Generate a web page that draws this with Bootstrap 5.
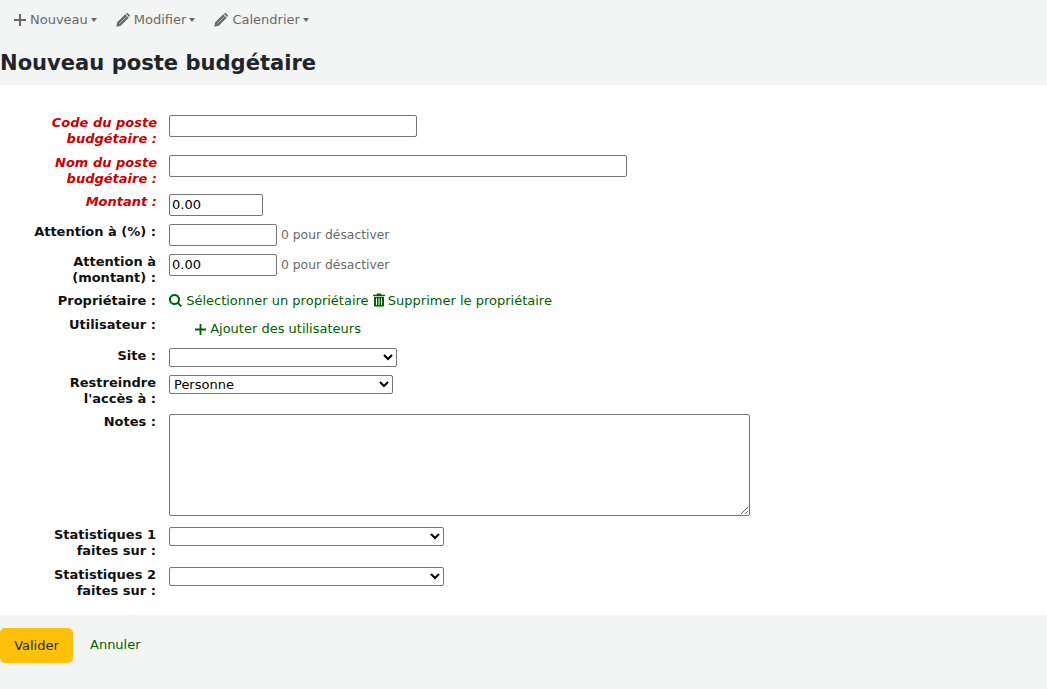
<!DOCTYPE html>
<html lang="fr">
<head>
<meta charset="utf-8">
<title>Nouveau poste budgétaire</title>
<link href="https://cdn.jsdelivr.net/npm/bootstrap@5.3.0/dist/css/bootstrap.min.css" rel="stylesheet">
<style>
html,body{height:100%}
body{font-family:"DejaVu Sans",sans-serif;font-size:13px;line-height:16px;background:#fff;color:#212529;display:flex;flex-direction:column;min-height:689px}
.kbar{background:#f3f4f4;height:85px}
.ktools{height:39px;padding-left:14px;gap:19px}
.ktool{color:#696969;font-size:13px;text-decoration:none;display:flex;align-items:center;gap:4px}
.ktool::after{content:"";border-top:4px solid #696969;border-left:3.5px solid transparent;border-right:3.5px solid transparent;margin-left:-1px}
.ktool svg{fill:#696969}
.kstripe{stroke:#f3f4f4;stroke-width:.6;fill:none}
.ktitle{font-size:21.07px;line-height:26px;font-weight:700;margin:11px 0 0 0;color:#212529}
.kform{padding-top:30px;height:530px}
.krow{display:flex;gap:12px;margin-bottom:8px}
.krow.ktight,.krow.kowner{margin-bottom:7px}
.krow.kusers{margin-bottom:11px}
.krow.knotes{margin-bottom:11px}
.klabel{width:157px;flex:none;text-align:right;font-weight:700;color:#111;margin:0;padding-left:20px;padding-right:1px}
.klabel.kreq{color:#c00;font-style:italic;padding-right:0}
.kin{height:22px;border:1px solid #767676;border-radius:2px;padding:0 2px 2px;font-size:13px;font-family:inherit;background:#fff;color:#000;display:block}
select.kin{height:19px;padding:0}
.khint{color:#696969;margin-left:4px;font-size:12.35px}
.khint.klow{margin-top:3px}
.klink{color:#006100;text-decoration:none}
.klink svg{fill:#006100;vertical-align:-2px}
.klink svg.ktrash{margin-right:-1px}
.kpad{padding-left:26px}
.kfoot{background:#f3f4f4;flex:1;padding-top:13px;gap:17px}
.kcancel{margin-top:9px}
.ksubmit{background:#ffc107;border:0;border-radius:5px;color:#212529;font-size:13px;width:73px;height:35px;padding:0}
</style>
</head>
<body>
<div class="kbar">
  <div class="d-flex align-items-center ktools">
    <a class="ktool" href="#"><svg width="12" height="12" viewBox="0 0 12 12"><path d="M5 0h2v5h5v2H7v5H5V7H0V5h5z"/></svg>Nouveau</a>
    <a class="ktool" href="#"><svg width="14" height="14" viewBox="0 0 14 14"><path d="M.3 13.700l.9-4.400 8-8 3.500 3.500-8 8zM10 .7l.5-.4c.4-.4 1-.4 1.400 0l1.800 1.800c.4.4.4 1 0 1.400l-.4.5z"/><path class="kstripe" d="M3.400 10.600 10.600 3.400"/></svg>Modifier</a>
    <a class="ktool" href="#"><svg width="14" height="14" viewBox="0 0 14 14"><path d="M.3 13.700l.9-4.400 8-8 3.500 3.500-8 8zM10 .7l.5-.4c.4-.4 1-.4 1.400 0l1.800 1.800c.4.4.4 1 0 1.400l-.4.5z"/><path class="kstripe" d="M3.400 10.600 10.600 3.400"/></svg>Calendrier</a>
  </div>
  <h1 class="ktitle">Nouveau poste budgétaire</h1>
</div>
<form class="kform">
  <div class="krow"><label class="klabel kreq">Code du poste budgétaire :</label><input class="kin" style="width:248px"></div>
  <div class="krow ktight"><label class="klabel kreq">Nom du poste budgétaire :</label><input class="kin" style="width:458px"></div>
  <div class="krow"><label class="klabel kreq">Montant :</label><input class="kin" style="width:94px" value="0.00"></div>
  <div class="krow"><label class="klabel">Attention à (%) :</label><div class="d-flex align-items-center"><input class="kin" style="width:108px"><span class="khint">0 pour désactiver</span></div></div>
  <div class="krow kowner"><label class="klabel">Attention à (montant) :</label><div class="d-flex align-items-start"><input class="kin" style="width:108px" value="0.00"><span class="khint klow">0 pour désactiver</span></div></div>
  <div class="krow"><label class="klabel">Propriétaire :</label><div><a class="klink" href="#"><svg width="13" height="13" viewBox="0 0 13 13"><path d="M5.500 0a5.500 5.500 0 0 1 4.500 8.700l3 3-1.400 1.300-3-3A5.500 5.500 0 1 1 5.500 0zm0 2a3.500 3.500 0 1 0 0 7 3.500 3.500 0 0 0 0-7z"/></svg> Sélectionner un propriétaire</a> <a class="klink" href="#"><svg class="ktrash" width="12" height="14" viewBox="0 0 12 13"><path d="M4 0h4l.6 1.200H12v1.300H0V1.200h3.400zM1 3.300h10V12c0 .6-.4 1-1 1H2c-.6 0-1-.4-1-1zm2 1.500V11.500h1V4.800zm2.500 0V11.500h1V4.800zm2.500 0V11.500h1V4.800z"/></svg> Supprimer le propriétaire</a></div></div>
  <div class="krow kusers"><label class="klabel">Utilisateur :</label><div class="kpad pt-1"><a class="klink" href="#"><svg width="11" height="11" viewBox="0 0 12 12"><path d="M5 0h2v5h5v2H7v5H5V7H0V5h5z"/></svg> Ajouter des utilisateurs</a></div></div>
  <div class="krow"><label class="klabel">Site :</label><select class="kin" style="width:228px"><option></option></select></div>
  <div class="krow ktight"><label class="klabel">Restreindre l'accès à :</label><select class="kin" style="width:224px"><option>Personne</option></select></div>
  <div class="krow knotes"><label class="klabel">Notes :</label><textarea class="kin" style="width:581px;height:102px"></textarea></div>
  <div class="krow"><label class="klabel">Statistiques 1 faites sur :</label><select class="kin" style="width:275px"><option></option></select></div>
  <div class="krow"><label class="klabel">Statistiques 2 faites sur :</label><select class="kin" style="width:275px"><option></option></select></div>
</form>
<div class="kfoot d-flex align-items-start">
  <button class="ksubmit" type="button">Valider</button>
  <a class="klink kcancel" href="#">Annuler</a>
</div>
</body>
</html>
